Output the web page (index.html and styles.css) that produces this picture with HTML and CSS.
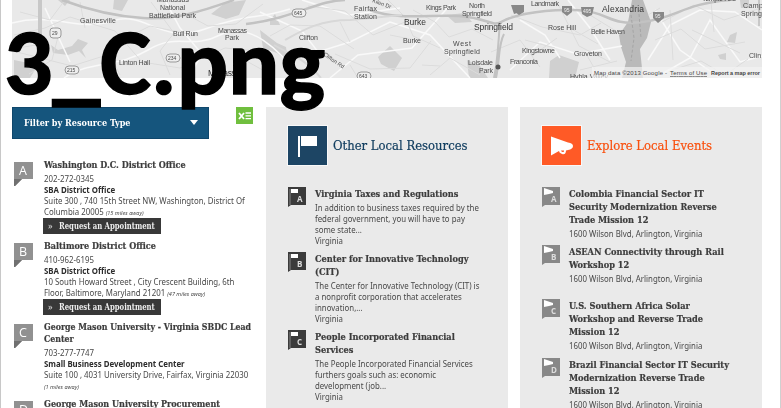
FILE: index.html
```html
<!DOCTYPE html>
<html lang="en">
<head>
<meta charset="utf-8">
<title>Local Resources</title>
<link rel="stylesheet" href="styles.css">
</head>
<body>
<svg class="defs" width="0" height="0">
  <symbol id="pin" viewBox="0 0 19 24"><path d="M0 0H19V17H8L1 24H0Z" fill="#919191"/><path d="M0 17H8L1 24H0Z" fill="#707070"/></symbol>
  <symbol id="flagpin" viewBox="0 0 18 20"><path d="M0 0H18V18H3L0 20Z" fill="#3b3b3b"/><path d="M2 2V18" stroke="#aaa" stroke-width=".7"/><path d="M3 2H10V6H3Z" fill="#fff"/></symbol>
  <symbol id="hornpin" viewBox="0 0 18 20"><path d="M0 0H18V18H3L0 20Z" fill="#888"/><path d="M2 1L11 4V6L7 7L2 8Z" fill="#fff"/></symbol>
</svg>
<div class="page">
  <svg class="map" viewBox="12 0 750 78" width="750" height="78">
    <rect x="12" width="750" height="78" fill="#e9e9e9"/>
    <g filter="url(#soft)">
      <filter id="soft"><feGaussianBlur stdDeviation=".55"/></filter>
      <g fill="#d0d0d0">
        <path d="M114 0H128L122 11L113 9Z"/><path d="M211 14L225 3L246 0L239 15L226 19Z"/>
        <path d="M51 45L58 50L72 46L78 39L88 43L82 50L86 58L79 51L68 55L53 53Z"/>
        <path d="M260 30L277 43L286 47L288 62L277 53L263 48Z"/><path d="M378 57L390 46L402 58L394 71L381 64Z"/>
        <path d="M550 61L559 55L579 62L575 78H549Z"/><path d="M446 15L465 13L472 22L455 23Z"/>
        <path d="M14 60L38 65L30 78H14ZM58 0L70 0L65 6ZM270 20L275 14L280 25H270ZM730 35L737 32L735 43L727 42ZM740 0H749V8H741Z"/>
        <path d="M467 60L480 66L488 78H469Z"/><path d="M718 55L726 53V60L720 59Z"/>
      </g>
      <path d="M632 0H643L651 22L647 38L640 49L643 78H622L626 62L621 47L619 35L628 22Z" fill="#bababa"/>
      <g fill="none" stroke="#f9f9f9" stroke-width="1.5">
        <path d="M12 23C55 12 78 32 112 21S160 45 205 29S255 20 290 9M64 78C90 60 118 68 148 50S191 50 220 35S280 50 300 78M45 8L70 62M165 0L180 28L202 54L188 78M260 12L302 31L318 52L350 42L390 22L430 35L470 78M302 0L350 15L400 8M330 78L358 55L412 48L450 5M510 70L540 42L577 54L622 46M520 20L545 35L560 58M568 0L590 28L610 60M648 60L670 25L700 10L735 12L762 30M655 10L680 50L720 78M660 75L690 58L710 20L740 62L762 56"/>
      </g>
      <g fill="none" stroke="#dcdcdc">
        <path d="M14 35L45 28L70 17L115 31L142 62L180 68L225 48L258 51M20 12L50 20L65 0M60 29L52 60L29 74M122 40L150 26L189 34M182 12L208 26L236 24L263 4M270 36L290 25L320 26L354 49M308 6L345 11L373 35L410 20M335 54L370 69L410 68L431 41M413 10L435 22L449 37L472 29L493 40M491 52L520 40L540 67M511 15L542 27L580 35L601 23M558 4L579 46L610 62M580 70L617 61M655 40L681 29L705 49L745 42M662 22L694 5L724 20L758 9M675 69L701 61L725 75L748 59M430 75L450 58L480 75M388 0L405 17L413 36L440 48M17 52L72 66L110 54L120 75M151 2L174 33L160 51L170 75"/>
        <path d="M340 22L350 42M390 35L420 41M525 40L555 48M532 56L557 38M590 15L616 31M570 28L598 44M670 10L673 60M692 30L740 53M711 2L714 32M80 2L85 28M18 48L42 44M239 57L270 74M422 65L440 66M350 65L358 78M648 15L660 8M585 52L600 78"/>
      </g>
      <g fill="none" stroke="#c2c2c2" stroke-width="2">
        <path d="M40 0V78" stroke="#c8c8c8" stroke-width="4"/><path d="M62 0C86 9 110 16 143 18S202 11 234 0" stroke-width="2.5"/>
        <path d="M246 24C295 18 318 0 345 0M370 10C400 21 430 14 459 16S492 27 501 22S535 9 573 10S606 26 642 22S681 4 730 0" stroke-width="2.5"/>
        <path d="M500 22C498 45 498 60 494 78M504 34C498 45 500 60 496 78" stroke-width="2"/>
        <path d="M274 45C297 58 306 60 321 78M285 40C303 30 320 20 350 20L402 15" stroke="#d8d8d8"/>
        <path d="M759 0V26" stroke="#c8c8c8"/>
      </g>
      <path d="M631 15L634 38L631 61M639 14L641 38" stroke="#a5a5a5" stroke-dasharray="3 2" fill="none"/>
      <g class="shields">
        <rect x="50" y="28" width="11" height="10" rx="3"/><rect x="65" y="66" width="14" height="8" rx="4"/><rect x="166" y="54" width="14" height="8" rx="4"/><rect x="292" y="9" width="14" height="8" rx="4"/><rect x="357" y="72" width="14" height="8" rx="4"/>
      </g>
      <g fill="#888"><path d="M562 6H572V12L567 16L562 12ZM581 7H594L592 15L587 17L582 14ZM653 12H664V18L658 23L653 18ZM511 5H520V12L514 14ZM515 5H524V12L519 15L515 12Z"/><circle cx="498" cy="67" r="2.5" fill="#555"/></g>
      <g class="places">
        <text x="80" y="23" textLength="36">Gainesville</text><text x="157" y="2" textLength="32">Manassas</text><text x="160" y="10" textLength="25">National</text><text x="149" y="18" textLength="47">Battlefield Park</text>
        <text x="173" y="36" textLength="25">Bull Run</text><text x="218" y="33" textLength="29">Manassas</text><text x="225" y="40" textLength="14">Park</text><text x="119" y="65" textLength="31">Linton Hall</text>
        <text x="208" y="76" textLength="36" class="town">Manassas</text><text x="354" y="11" textLength="23">Fairfax</text><text x="354" y="19" textLength="23">Station</text>
        <text x="299" y="40" textLength="19">Clifton</text><text x="404" y="25" textLength="22" class="town">Burke</text><text x="403" y="43" textLength="18">Burke</text><text x="426" y="10" textLength="30">Kings Park</text>
        <text x="469" y="8" textLength="16">North</text><text x="462" y="16" textLength="30">Springfield</text><text x="474" y="30" textLength="39" class="town">Springfield</text><text x="453" y="46" textLength="18">West</text><text x="444" y="54" textLength="36">Springfield</text>
        <text x="468" y="65" textLength="25">Loisdale</text><text x="479" y="73" textLength="14">Park</text><text x="531" y="6" textLength="28">Landmark</text><text x="602" y="12" textLength="42" class="town">Alexandria</text>
        <text x="548" y="30" textLength="28">Rose Hill</text><text x="591" y="34" textLength="34">Belle Haven</text><text x="522" y="53" textLength="33">Kingstowne</text><text x="574" y="56" textLength="28">Groveton</text><text x="510" y="64" textLength="28">Franconia</text>
        <text x="743" y="8" textLength="20">Camp</text><text x="741" y="16" textLength="21">Spring</text><text x="749" y="58">Clin</text><text x="570" y="79" textLength="38">Hybla Valley</text><text x="702" y="1" textLength="34">Temple Hills</text>
        <text class="road" transform="translate(372 2) rotate(20)">Kilen Dr</text><text class="road" transform="translate(323 55) rotate(35)">Clifton Rd</text>
        <text class="num" x="52" y="35">29</text><text class="num" x="67" y="72">215</text><text class="num" x="168" y="60">234</text><text class="num" x="294" y="15">645</text><text class="num" x="359" y="78">643</text>
        <text class="num light" x="564" y="12">95</text><text class="num light" x="583" y="13">495</text><text class="num light" x="655" y="18">95</text>
      </g>
      <rect x="592" y="67" width="170" height="11" fill="#f4f4f4" opacity=".7"/>
    </g>
    <g class="credit"><text x="594" y="75" textLength="73">Map data ©2013 Google -</text><text x="670" y="75" textLength="37" text-decoration="underline">Terms of Use</text><text x="711" y="75" textLength="49" class="report">Report a map error</text></g>
  </svg>

  <main class="columns">
    <section class="offices">
      <div class="toolbar">
        <div class="filter"><span class="filter-label">Filter by Resource Type</span><i class="caret"></i></div>
        <svg class="excel" width="17" height="17"><rect width="17" height="17" fill="#70bf3e"/><path d="M3 6L8 12M8 6L3 12" stroke="#fff" stroke-width="1.8"/><path d="M9.5 6H15M9.5 8.800H15M9.500 11.600H15" stroke="#fff" stroke-width="1.3"/></svg>
      </div>
      <div class="list">
        <article><div class="marker"><svg><use href="#pin"/></svg><b>A</b></div><div>
          <h3>Washington D.C. District Office</h3><p>202-272-0345</p><p class="strong">SBA District Office</p><p>Suite 300 , 740 15th Street NW, Washington, District Of<br>Columbia 20005 <em>(15 miles away)</em></p><a class="button"><span>»</span><span class="cta">Request an Appointment</span></a></div></article>
        <article><div class="marker"><svg><use href="#pin"/></svg><b>B</b></div><div>
          <h3>Baltimore District Office</h3><p>410-962-6195</p><p class="strong">SBA District Office</p><p>10 South Howard Street , City Crescent Building, 6th<br>Floor, Baltimore, Maryland 21201 <em>(47 miles away)</em></p><a class="button"><span>»</span><span class="cta">Request an Appointment</span></a></div></article>
        <article><div class="marker"><svg><use href="#pin"/></svg><b>C</b></div><div>
          <h3 class="long">George Mason University - Virginia SBDC Lead<br>Center</h3><p>703-277-7747</p><p class="strong">Small Business Development Center</p><p>Suite 100 , 4031 University Drive, Fairfax, Virginia 22030<br><em>(1 miles away)</em></p></div></article>
        <article><div class="marker"><svg><use href="#pin"/></svg><b>D</b></div><div><h3>George Mason University Procurement</h3></div></article>
      </div>
    </section>

    <section class="panel resources">
      <header><svg width="39" height="39"><rect width="39" height="39" fill="#1d4564"/><path d="M10 10H12V31H10ZM13 10H29V20H13Z" fill="#fff"/></svg><h2>Other Local Resources</h2></header>
      <div class="list">
        <article><div class="marker"><svg><use href="#flagpin"/></svg><b>A</b></div><div><h3>Virginia Taxes and Regulations</h3><p>In addition to business taxes required by the<br>federal government, you will have to pay<br>some state...<br>Virginia</p></div></article>
        <article><div class="marker"><svg><use href="#flagpin"/></svg><b>B</b></div><div><h3>Center for Innovative Technology<br>(CIT)</h3><p>The Center for Innovative Technology (CIT) is<br>a nonprofit corporation that accelerates<br>innovation,...<br>Virginia</p></div></article>
        <article><div class="marker"><svg><use href="#flagpin"/></svg><b>C</b></div><div><h3>People Incorporated Financial<br>Services</h3><p>The People Incorporated Financial Services<br>furthers goals such as: economic<br>development (job...<br>Virginia</p></div></article>
      </div>
    </section>

    <section class="panel events">
      <header><svg width="39" height="39"><rect width="39" height="39" fill="#ff5a26"/><path d="M9 10.500L26 16.500Q31 17 31 20Q31 23 26 24L24 24.500Q24 29 20 28Q17 27 17 25L9 29.500Z" fill="#fff"/><path d="M19 24.500Q20 27 22 25.500V24.500" fill="#ff5a26"/></svg><h2>Explore Local Events</h2></header>
      <div class="list">
        <article><div class="marker"><svg><use href="#hornpin"/></svg><b>A</b></div><div><h3>Colombia Financial Sector IT<br>Security Modernization Reverse<br>Trade Mission 12</h3><p>1600 Wilson Blvd, Arlington, Virginia</p></div></article>
        <article><div class="marker"><svg><use href="#hornpin"/></svg><b>B</b></div><div><h3>ASEAN Connectivity through Rail<br>Workshop 12</h3><p>1600 Wilson Blvd, Arlington, Virginia</p></div></article>
        <article><div class="marker"><svg><use href="#hornpin"/></svg><b>C</b></div><div><h3>U.S. Southern Africa Solar<br>Workshop and Reverse Trade<br>Mission 12</h3><p>1600 Wilson Blvd, Arlington, Virginia</p></div></article>
        <article><div class="marker"><svg><use href="#hornpin"/></svg><b>D</b></div><div><h3>Brazil Financial Sector IT Security<br>Modernization Reverse Trade<br>Mission 12</h3><p>1600 Wilson Blvd, Arlington, Virginia</p></div></article>
      </div>
    </section>
  </main>
  <svg class="caption" width="340" height="120"><text x="4" y="94" textLength="321" lengthAdjust="spacingAndGlyphs">3_C.png</text></svg>
</div>
</body>
</html>
```
FILE: styles.css
```css
* { box-sizing: border-box; }
body { margin: 0; background: #fff; overflow: hidden; font-family: "Noto Sans", "Open Sans", sans-serif; }
.defs { display: none; }
.page { position: relative; height: 408px; overflow: hidden; border-left: 1px solid #c8c8c8; border-right: 1px solid #d0d0d0; padding: 0 18px 0 11px; }
.map { display: block; }
.places text { font: 7px "Liberation Sans", sans-serif; fill: #4a4a4a; }
.places .town { font-size: 8.5px; fill: #333; }
.places .road { font-size: 5.5px; }
.places .num { font-size: 5px; }
.places .light { fill: #eee; }
.shields rect { fill: #eee; stroke: #999; }
.credit text { font: 6px "Liberation Sans", sans-serif; fill: #444; }
.credit .report { font-size: 5.5px; font-weight: bold; }
.columns { display: grid; grid-template-columns: 242px 242px 242px; column-gap: 12px; margin-top: 29px; height: 301px; }
.toolbar { display: flex; justify-content: space-between; align-items: flex-start; height: 52px; padding-right: 1px; }
.filter { display: flex; align-items: center; justify-content: space-between; width: 197px; height: 32px; padding: 0 10px 2px 11px; background: #15557d; border: 1px solid #0f476c; }
.filter-label { font: bold 10px "DejaVu Serif Condensed", "DejaVu Serif", serif; font-stretch: condensed; color: #fff; white-space: nowrap; transform: scaleX(.9); transform-origin: left; }
.caret { border: 4px solid transparent; border-top: 5px solid #fff; border-bottom: 0; }
.panel { background: #eaeaea; }
.panel header { display: flex; align-items: center; gap: 6px; height: 80px; padding: 0 0 3px 22px; }
.panel header svg { flex: none; outline: 1px solid #f8f8f8; }
h2 { margin: 0; font: 13px "DejaVu Serif Condensed", "DejaVu Serif", serif; font-stretch: condensed; color: #123e60; white-space: nowrap; transform: scaleX(.995); transform-origin: left; -webkit-text-stroke: .2px; }
.events h2 { color: #f9500e; }
.list { display: flex; flex-direction: column; filter: blur(.55px); }
article { display: grid; flex: none; white-space: nowrap; }
h3 { margin: 0 0 2px; font: bold 10px/13px "DejaVu Serif Condensed", "DejaVu Serif", serif; font-stretch: condensed; color: #3c3c3c; -webkit-text-stroke: .2px; transform: scaleX(.915); transform-origin: left; }
p { margin: 0; font-size: 8.5px; line-height: 11px; color: #484848; transform: scaleX(.923); transform-origin: left; }
.strong { font-weight: bold; color: #2c2c2c; }
em { font-size: 6px; }
.marker { position: relative; }
.marker svg { display: block; width: 18px; height: 20px; }
.marker b { position: absolute; left: 9px; top: 7px; font: bold 8px/9px "Open Sans", sans-serif; color: #ddd; }
.offices article { grid-template-columns: 32px 210px; height: 81px; }
.offices article:nth-child(3) { height: 76.5px; }
.offices h3 { line-height: 12px; transform: scaleX(.897); }
.offices .long { transform: scaleX(.873); }
.offices .marker { padding: 3px 0 0 2px; }
.offices .marker svg { width: 19px; height: 24px; }
.offices .marker b { left: 7px; top: 5px; font: 12.5px/13px "Open Sans", sans-serif; color: #fff; }
.button { display: flex; align-items: center; gap: 6px; margin-left: -1px; margin-top: -1px; width: 118px; height: 16px; padding: 0 5px 1px; background: #383838; color: #ddd; font-size: 9px; }
.cta { font: bold 8.5px "DejaVu Serif Condensed", "DejaVu Serif", serif; font-stretch: condensed; color: #eee; transform: scaleX(.9); transform-origin: left; }
.panel article { grid-template-columns: 27px 200px; margin-left: 22px; }
.panel .list { margin-top: -.5px; }
.resources article:nth-child(1) { height: 65.5px; }
.resources article:nth-child(2) { height: 78px; }
.events article:nth-child(1) { height: 58.5px; }
.events article:nth-child(2) { height: 54px; }
.events article:nth-child(3) { height: 58.5px; }
.caption { position: absolute; left: -1px; top: 0; }
.caption text { font: bold 93px Carlito, Lato, sans-serif; fill: #000; stroke: #000; stroke-width: 1.5px; }
```
